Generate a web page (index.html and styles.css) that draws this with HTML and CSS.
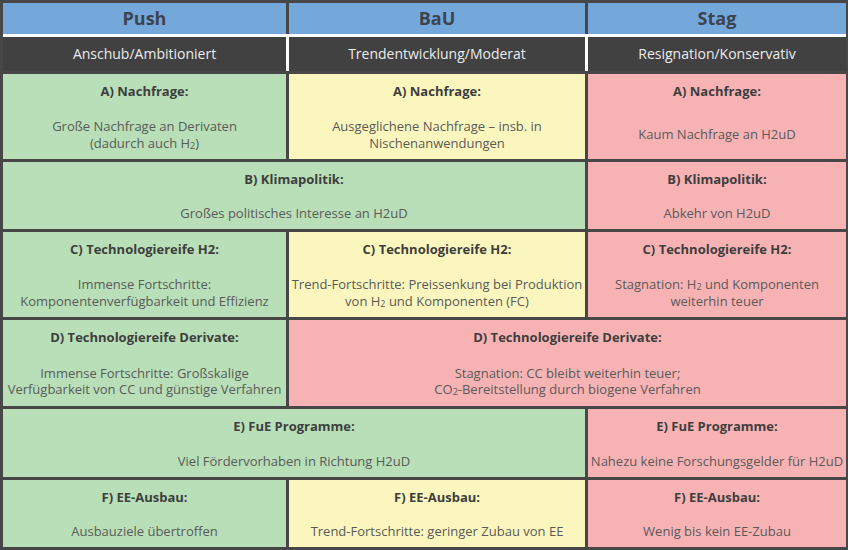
FILE: index.html
```html
<!DOCTYPE html>
<html lang="de">
<head>
<meta charset="utf-8">
<title>Szenarien</title>
<link rel="stylesheet" href="styles.css">
</head>
<body>
<div class="table">
  <div class="head1">
    <div class="h1cell">Push</div>
    <div class="h1cell">BaU</div>
    <div class="h1cell">Stag</div>
  </div>
  <div class="head2">
    <div class="h2cell">Anschub/Ambitioniert</div>
    <div class="h2cell">Trendentwicklung/Moderat</div>
    <div class="h2cell">Resignation/Konservativ</div>
  </div>
  <div class="body">
    <div class="cell green">
      <div class="title">A) Nachfrage:</div>
      <div class="text"><p>Große Nachfrage an Derivaten<br>(dadurch auch H<sub>2</sub>)</p></div>
    </div>
    <div class="cell yellow">
      <div class="title">A) Nachfrage:</div>
      <div class="text"><p>Ausgeglichene Nachfrage – insb. in<br>Nischenanwendungen</p></div>
    </div>
    <div class="cell pink">
      <div class="title">A) Nachfrage:</div>
      <div class="text"><p>Kaum Nachfrage an H2uD</p></div>
    </div>

    <div class="cell green span2">
      <div class="title">B) Klimapolitik:</div>
      <div class="text"><p>Großes politisches Interesse an H2uD</p></div>
    </div>
    <div class="cell pink">
      <div class="title">B) Klimapolitik:</div>
      <div class="text"><p>Abkehr von H2uD</p></div>
    </div>

    <div class="cell green">
      <div class="title">C) Technologiereife H2:</div>
      <div class="text"><p>Immense Fortschritte:<br>Komponentenverfügbarkeit und Effizienz</p></div>
    </div>
    <div class="cell yellow">
      <div class="title">C) Technologiereife H2:</div>
      <div class="text"><p>Trend-Fortschritte: Preissenkung bei Produktion<br>von H<sub>2</sub> und Komponenten (FC)</p></div>
    </div>
    <div class="cell pink">
      <div class="title">C) Technologiereife H2:</div>
      <div class="text"><p>Stagnation: H<sub>2</sub> und Komponenten<br>weiterhin teuer</p></div>
    </div>

    <div class="cell green">
      <div class="title">D) Technologiereife Derivate:</div>
      <div class="text"><p>Immense Fortschritte: Großskalige<br>Verfügbarkeit von CC und günstige Verfahren</p></div>
    </div>
    <div class="cell pink span2">
      <div class="title">D) Technologiereife Derivate:</div>
      <div class="text"><p>Stagnation: CC bleibt weiterhin teuer;<br>CO<sub>2</sub>-Bereitstellung durch biogene Verfahren</p></div>
    </div>

    <div class="cell green span2">
      <div class="title">E) FuE Programme:</div>
      <div class="text"><p>Viel Fördervorhaben in Richtung H2uD</p></div>
    </div>
    <div class="cell pink">
      <div class="title">E) FuE Programme:</div>
      <div class="text"><p>Nahezu keine Forschungsgelder für H2uD</p></div>
    </div>

    <div class="cell green">
      <div class="title">F) EE-Ausbau:</div>
      <div class="text"><p>Ausbauziele übertroffen</p></div>
    </div>
    <div class="cell yellow">
      <div class="title">F) EE-Ausbau:</div>
      <div class="text"><p>Trend-Fortschritte: geringer Zubau von EE</p></div>
    </div>
    <div class="cell pink">
      <div class="title">F) EE-Ausbau:</div>
      <div class="text"><p>Wenig bis kein EE-Zubau</p></div>
    </div>
  </div>
</div>
</body>
</html>
```

FILE: styles.css
```css
* { box-sizing: border-box; }
html, body { margin: 0; padding: 0; }
body {
  width: 848px;
  height: 550px;
  overflow: hidden;
  font-family: "Open Sans", "Noto Sans", sans-serif;
}
.table {
  width: 848px;
  height: 550px;
  background: #474747;
  padding: 3px 2px 3px 3px;
  display: flex;
  flex-direction: column;
}
.head1, .head2, .body {
  display: grid;
  grid-template-columns: 283px 296px 258px;
  column-gap: 3px;
}
.head1 { height: 31px; }
.h1cell {
  background: #74a8da;
  color: #3c4452;
  font-weight: 700;
  font-size: 18px;
  display: flex;
  align-items: center;
  justify-content: center;
  padding-bottom: 1px;
}
.head2 {
  background: #ffffff;
  padding-top: 3px;
  height: 37px;
}
.h2cell {
  background: #414141;
  color: #ececec;
  font-size: 14px;
  display: flex;
  align-items: center;
  justify-content: center;
  padding-bottom: 1px;
}
.body {
  margin-top: 3px;
  row-gap: 3px;
  grid-template-rows: 85px 67px 85px 86px 68px 67px;
}
.cell {
  display: flex;
  flex-direction: column;
  align-items: center;
  text-align: center;
  padding: 8px 1px 0;
}
.span2 { grid-column: span 2; }
.green { background: #b8dfb7; }
.yellow { background: #fbf6bd; }
.pink { background: #f7b3b4; }
.title {
  font-weight: 700;
  font-size: 13px;
  line-height: 18px;
  color: #3e3e3e;
}
.text {
  flex: 1;
  display: flex;
  align-items: center;
  justify-content: center;
  padding-top: 10px;
}
.text p {
  margin: 0;
  font-size: 13px;
  line-height: 16.5px;
  color: #5a5a5a;
  white-space: nowrap;
}
sub {
  font-size: 9px;
  vertical-align: -1px;
  line-height: 0;
}
```
